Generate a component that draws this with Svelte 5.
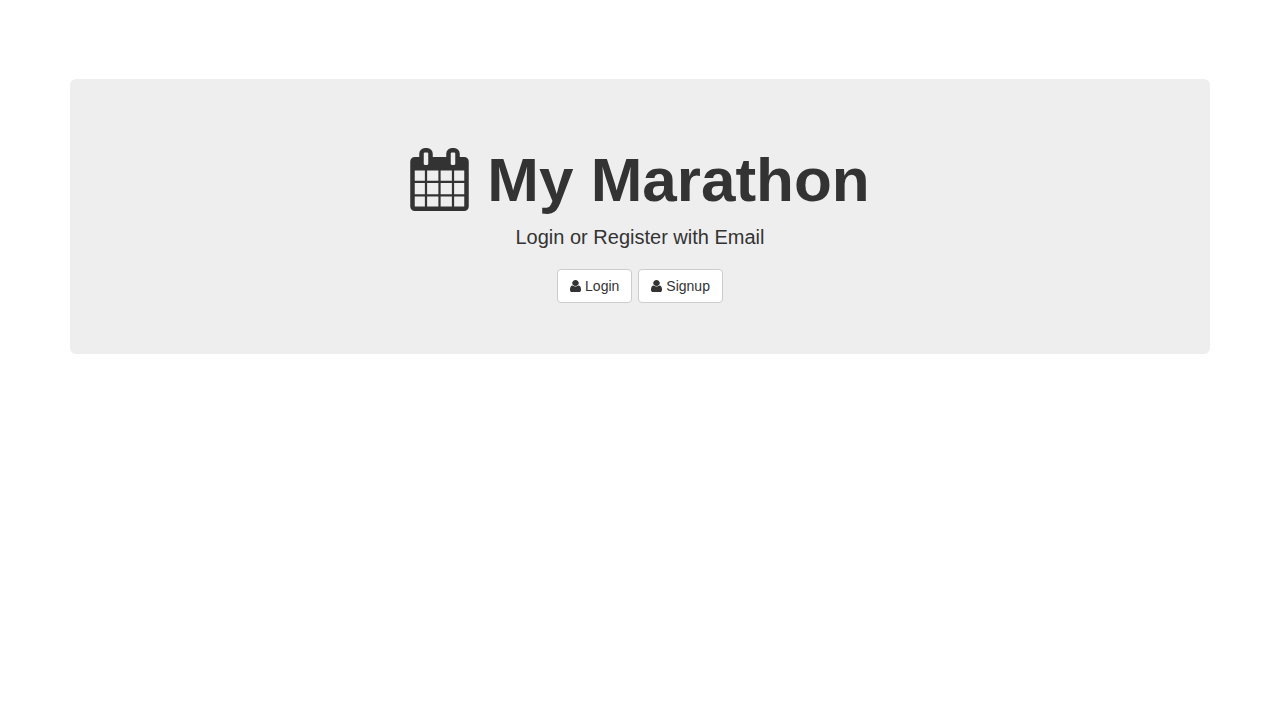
<script>
  const actions = [
    { label: 'Login', href: '#login' },
    { label: 'Signup', href: '#signup' }
  ];
</script>

<main class="container">
  <section class="jumbotron">
    <h1>
      <svg class="calendar" viewBox="0 0 1664 1792" aria-hidden="true">
        <path d="M128 1664h288v-288h-288v288zM480 1664h320v-288h-320v288zM128 1312h288v-320h-288v320zM480 1312h320v-320h-320v320zM128 928h288v-288h-288v288zM864 1664h320v-288h-320v288zM480 928h320v-288h-320v288zM1248 1664h288v-288h-288v288zM864 1312h320v-320h-320v320zM512 448v-288q0-13-9.500-22.500t-22.500-9.500h-64q-13 0-22.500 9.500t-9.500 22.500v288q0 13 9.500 22.500t22.500 9.500h64q13 0 22.500-9.500t9.500-22.500zM1248 1312h288v-320h-288v320zM864 928h320v-288h-320v288zM1248 928h288v-288h-288v288zM1280 448v-288q0-13-9.500-22.500t-22.500-9.500h-64q-13 0-22.500 9.500t-9.500 22.500v288q0 13 9.500 22.500t22.500 9.500h64q13 0 22.500-9.500t9.500-22.500zM1664 384v1280q0 52-38 90t-90 38h-1408q-52 0-90-38t-38-90v-1280q0-52 38-90t90-38h128v-96q0-66 47-113t113-47h64q66 0 113 47t47 113v96h384v-96q0-66 47-113t113-47h64q66 0 113 47t47 113v96h128q52 0 90 38t38 90z" />
      </svg>
      My Marathon
    </h1>
    <p>Login or Register with Email</p>
    <nav class="actions" aria-label="Account">
      {#each actions as action}
        <a class="button" href={action.href}>
          <svg class="user" viewBox="0 128 1280 1536" preserveAspectRatio="none" aria-hidden="true">
            <path d="M1280 1399q0 109-62.500 187t-150.500 78h-854q-88 0-150.500-78t-62.500-187q0-85 8.500-160.500t31.500-152 58.500-131 94-89 134.500-34.500q131 128 313 128t313-128q76 0 134.500 34.500t94 89 58.500 131 31.500 152 8.500 160.500zM1024 512q0 159-112.500 271.500t-271.500 112.500-271.500-112.500-112.500-271.500 112.500-271.500 271.500-112.500 271.500 112.500 112.500 271.500z" />
          </svg>
          {action.label}
        </a>
      {/each}
    </nav>
  </section>
</main>

<style>
  :global(body) {
    margin: 0;
    background: #fff;
    color: #333;
    font: 14px/20px "Helvetica Neue", Helvetica, "Liberation Sans", Arial, sans-serif;
  }

  .container {
    box-sizing: border-box;
    max-width: 1170px;
    margin: 0 auto;
    padding: 79px 15px 30px;
  }

  .jumbotron {
    padding: 48px 60px 51px;
    border-radius: 6px;
    background: #eee;
    text-align: center;
  }

  h1 {
    display: flex;
    justify-content: center;
    align-items: center;
    gap: 18px;
    margin: 18px 0 8px;
    font-size: 62px;
    line-height: 69px;
    font-weight: 700;
  }

  svg {
    fill: currentColor;
  }

  .calendar {
    width: 59px;
    height: 63px;
  }

  p {
    margin: 0 0 17px;
    font-size: 20px;
    line-height: 30px;
    font-weight: 300;
  }

  .actions {
    display: flex;
    justify-content: center;
    gap: 6px;
  }

  .button {
    display: flex;
    align-items: center;
    gap: 4px;
    padding: 6px 12px;
    border: 1px solid #ccc;
    border-radius: 4px;
    background: #fff;
    color: #333;
    text-decoration: none;
  }

  .button:hover {
    background: #e6e6e6;
  }

  .user {
    width: 11px;
    height: 12px;
  }
</style>
